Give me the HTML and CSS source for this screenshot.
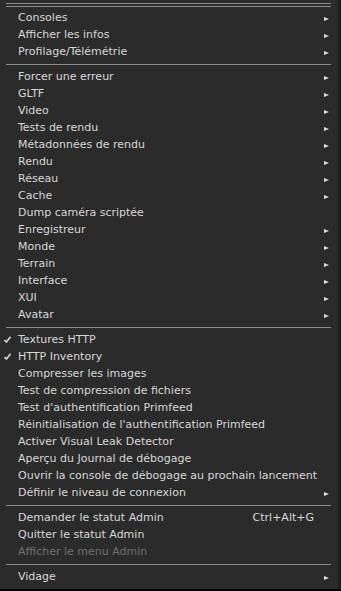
FILE: index.html
```html
<!DOCTYPE html>
<html lang="fr">
<head>
  <meta charset="UTF-8" />
  <title>Menu Avancé</title>
  <link rel="stylesheet" href="styles.css">
</head>
<body>
  <div class="menu">
    <div class="tearoff"></div>

    <div class="item sub"><span class="check"></span><span class="label">Consoles</span><span class="arrow"></span></div>
    <div class="item sub"><span class="check"></span><span class="label">Afficher les infos</span><span class="arrow"></span></div>
    <div class="item sub"><span class="check"></span><span class="label">Profilage/Télémétrie</span><span class="arrow"></span></div>
    <div class="sep"></div>

    <div class="item sub"><span class="check"></span><span class="label">Forcer une erreur</span><span class="arrow"></span></div>
    <div class="item sub"><span class="check"></span><span class="label">GLTF</span><span class="arrow"></span></div>
    <div class="item sub"><span class="check"></span><span class="label">Video</span><span class="arrow"></span></div>
    <div class="item sub"><span class="check"></span><span class="label">Tests de rendu</span><span class="arrow"></span></div>
    <div class="item sub"><span class="check"></span><span class="label">Métadonnées de rendu</span><span class="arrow"></span></div>
    <div class="item sub"><span class="check"></span><span class="label">Rendu</span><span class="arrow"></span></div>
    <div class="item sub"><span class="check"></span><span class="label">Réseau</span><span class="arrow"></span></div>
    <div class="item sub"><span class="check"></span><span class="label">Cache</span><span class="arrow"></span></div>
    <div class="item"><span class="check"></span><span class="label">Dump caméra scriptée</span><span class="arrow"></span></div>
    <div class="item sub"><span class="check"></span><span class="label">Enregistreur</span><span class="arrow"></span></div>
    <div class="item sub"><span class="check"></span><span class="label">Monde</span><span class="arrow"></span></div>
    <div class="item sub"><span class="check"></span><span class="label">Terrain</span><span class="arrow"></span></div>
    <div class="item sub"><span class="check"></span><span class="label">Interface</span><span class="arrow"></span></div>
    <div class="item sub"><span class="check"></span><span class="label">XUI</span><span class="arrow"></span></div>
    <div class="item sub"><span class="check"></span><span class="label">Avatar</span><span class="arrow"></span></div>
    <div class="sep"></div>

    <div class="item checked"><span class="check"><svg width="7" height="7" viewBox="0 0 7 7"><path d="M0.5 4 L2.5 6 L6.5 0.8" fill="none" stroke="#d6d6d6" stroke-width="1.6"/></svg></span><span class="label">Textures HTTP</span><span class="arrow"></span></div>
    <div class="item checked"><span class="check"><svg width="7" height="7" viewBox="0 0 7 7"><path d="M0.5 4 L2.5 6 L6.5 0.8" fill="none" stroke="#d6d6d6" stroke-width="1.6"/></svg></span><span class="label">HTTP Inventory</span><span class="arrow"></span></div>
    <div class="item"><span class="check"></span><span class="label">Compresser les images</span><span class="arrow"></span></div>
    <div class="item"><span class="check"></span><span class="label">Test de compression de fichiers</span><span class="arrow"></span></div>
    <div class="item"><span class="check"></span><span class="label">Test d'authentification Primfeed</span><span class="arrow"></span></div>
    <div class="item"><span class="check"></span><span class="label">Réinitialisation de l'authentification Primfeed</span><span class="arrow"></span></div>
    <div class="item"><span class="check"></span><span class="label">Activer Visual Leak Detector</span><span class="arrow"></span></div>
    <div class="item"><span class="check"></span><span class="label">Aperçu du Journal de débogage</span><span class="arrow"></span></div>
    <div class="item"><span class="check"></span><span class="label">Ouvrir la console de débogage au prochain lancement</span><span class="arrow"></span></div>
    <div class="item sub"><span class="check"></span><span class="label">Définir le niveau de connexion</span><span class="arrow"></span></div>
    <div class="sep"></div>

    <div class="item"><span class="check"></span><span class="label">Demander le statut Admin</span><span class="shortcut">Ctrl+Alt+G</span><span class="arrow"></span></div>
    <div class="item"><span class="check"></span><span class="label">Quitter le statut Admin</span><span class="arrow"></span></div>
    <div class="item disabled"><span class="check"></span><span class="label">Afficher le menu Admin</span><span class="arrow"></span></div>
    <div class="sep"></div>

    <div class="item sub"><span class="check"></span><span class="label">Vidage</span><span class="arrow"></span></div>
  </div>
</body>
</html>
```

FILE: styles.css
```css
:root {
  --bg: #2b2b2b;
  --text: #d8d8d8;
  --muted: #707070;
  --line: #8c8c8c;
  --font: 'DejaVu Sans', sans-serif;
}
* { box-sizing: border-box; }
body {
  margin: 0;
  width: 341px;
  height: 591px;
  background: #000;
  font-family: var(--font);
  font-size: 11px;
  color: var(--text);
  overflow: hidden;
}
.menu {
  width: 341px;
  height: 589px;
  background: var(--bg);
  border-right: 3px solid #1d1d1d;
}
.tearoff {
  height: 9px;
  margin: 0 7px 0 6px;
  padding-top: 3px;
}
.tearoff::before, .tearoff::after {
  content: '';
  display: block;
  height: 1px;
  background: var(--line);
}
.tearoff::after { margin-top: 2px; }
.sep {
  height: 8px;
  margin: 0 7px 0 6px;
  padding-top: 4px;
}
.sep::before {
  content: '';
  display: block;
  height: 1px;
  background: var(--line);
}
.item {
  display: flex;
  align-items: center;
  height: 17px;
  line-height: 17px;
  padding-right: 9px;
  white-space: nowrap;
}
.check {
  width: 18px;
  flex: none;
  display: flex;
  align-items: center;
  padding-left: 4px;
}
.check svg { display: block; }
.label { flex: 1; }
.shortcut { flex: none; }
.arrow {
  width: 15px;
  flex: none;
  display: flex;
  justify-content: flex-end;
}
.sub .arrow::before {
  content: '';
  width: 0;
  height: 0;
  margin-top: 2px;
  border-top: 2.5px solid transparent;
  border-bottom: 2.5px solid transparent;
  border-left: 5px solid #dcdcdc;
}
.disabled { color: var(--muted); }
```
